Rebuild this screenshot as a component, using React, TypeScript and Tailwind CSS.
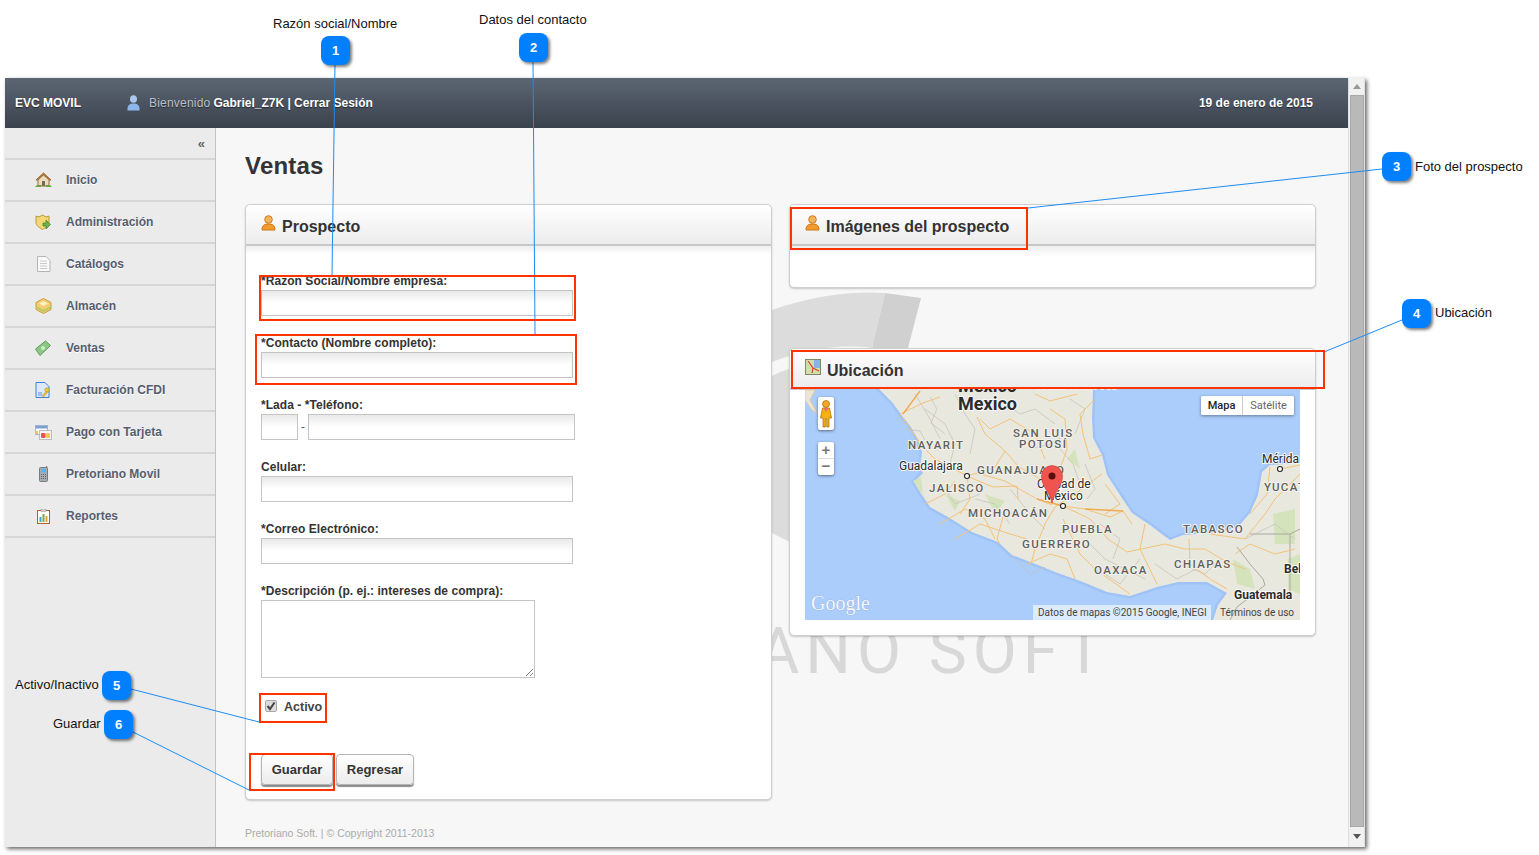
import React from 'react';

const sans = { fontFamily: '"Liberation Sans", Arial, sans-serif' };

// sidebar icons, 16x16
const HomeIcon = () => (
  <svg width="17" height="16" viewBox="0 0 17 16">
    <path d="M8.5 1 L1 8 L3 8 L3 14 L14 14 L14 8 L16 8 Z" fill="#e9dcc0" stroke="#9a6a32" strokeWidth="1" />
    <path d="M8.5 1 L1 8 L3.5 8 L8.5 3.5 L13.5 8 L16 8 Z" fill="#a8763c" />
    <rect x="7" y="9" width="3" height="5" fill="#7b6a58" />
    <path d="M0 15 h6 v-2 h-4 z M11 13 h4 l2 2 h-6 z" fill="#69a545" />
  </svg>
);
const ShieldIcon = () => (
  <svg width="16" height="16" viewBox="0 0 16 16">
    <path d="M1 2 L4 3 L7.5 1 L11 3 L14 2 L14 8 C14 12 10 14 7.5 15.5 C5 14 1 12 1 8 Z" fill="#f3d873" stroke="#b79a3c" />
    <path d="M8 9 h3 v-3 l4.500 4.500 l-4.500 4.500 v-3 h-3 z" fill="#6cb14a" stroke="#3f7f2b" strokeWidth=".7" />
  </svg>
);
const DocIcon = () => (
  <svg width="15" height="16" viewBox="0 0 15 16">
    <path d="M1.500 .5 H10 L14 4.500 V15.500 H1.500 Z" fill="#fafafa" stroke="#b4b4b4" />
    <path d="M4 5 H11 M4 7.500 H11 M4 10 H11 M4 12.500 H11" stroke="#c8c8c8" />
  </svg>
);
const BoxIcon = () => (
  <svg width="17" height="16" viewBox="0 0 17 16">
    <path d="M8.500 .5 L16 4.500 V11.500 L8.500 15.500 L1 11.500 V4.500 Z" fill="#f2cd72" stroke="#c99a3f" />
    <path d="M1 8 L8.500 12 L16 8 V10 L8.500 14 L1 10 Z" fill="#b5c95f" />
    <path d="M4 5.500 L8.500 3 L13 5.500 L8.500 8 Z" fill="#fdf1c4" />
  </svg>
);
const MoneyIcon = () => (
  <svg width="16" height="16" viewBox="0 0 16 16">
    <path d="M0.500 9 L10.500 1 L15.500 5.500 L5 15.500 Z" fill="#8cc785" stroke="#5f9d58" />
    <circle cx="8" cy="8" r="2" fill="#cfe9c9" />
  </svg>
);
const InvoiceIcon = () => (
  <svg width="16" height="16" viewBox="0 0 16 16">
    <path d="M1 .5 H10 L14 4.500 V15.500 H1 Z" fill="#dbe9fb" stroke="#3f7fd4" />
    <path d="M3 11 H7 M3 13 H7" stroke="#5b95e0" />
    <circle cx="12" cy="8" r="2.200" fill="#f0c64a" stroke="#b98d22" strokeWidth=".6" />
    <path d="M11 9.500 L7 14 L8.500 15 L12.500 10.500 Z" fill="#e8b93c" stroke="#b98d22" strokeWidth=".4" />
  </svg>
);
const CardIcon = () => (
  <svg width="17" height="15" viewBox="0 0 17 15">
    <rect x="0.500" y="0.500" width="12" height="9" fill="#fff" stroke="#9fb4cf" />
    <rect x="1" y="1" width="11" height="2.500" fill="#7f9fd0" />
    <rect x="0" y="6" width="3" height="3" fill="#eac06a" />
    <rect x="4.500" y="5.500" width="12" height="9" fill="#f4f4f4" stroke="#bdbdbd" />
    <rect x="6" y="8" width="4.500" height="5" rx="1" fill="#f1524d" />
    <rect x="11" y="8" width="4" height="5" rx="1" fill="#f3c65f" />
  </svg>
);
const PhoneIcon = () => (
  <svg width="9" height="16" viewBox="0 0 9 16">
    <rect x="0.500" y="1.500" width="8" height="14" rx="1" fill="#a8adb3" stroke="#767b82" />
    <rect x="2" y="3" width="5" height="3.500" fill="#5cb1ee" />
    <path d="M2 8.500 h5 M2 10.500 h5 M2 12.500 h5" stroke="#5d6268" strokeDasharray="1 1" />
    <rect x="7" y="0" width="1.200" height="2" fill="#767b82" />
  </svg>
);
const ReportIcon = () => (
  <svg width="13" height="15" viewBox="0 0 13 15">
    <rect x="0.500" y="1.500" width="12" height="13" fill="#fff" stroke="#bd5a2a" />
    <rect x="4" y="0" width="5" height="2.500" fill="#d8d8d8" stroke="#8c8c8c" strokeWidth=".5" />
    <rect x="2.500" y="8" width="2" height="5" fill="#4a9ed8" />
    <rect x="5.500" y="5" width="2" height="8" fill="#79b043" />
    <rect x="8.500" y="7" width="2" height="6" fill="#e8a33a" />
  </svg>
);
const PersonIcon = () => (
  <svg width="15" height="16" viewBox="0 0 15 16">
    <circle cx="7.500" cy="4.500" r="3.800" fill="#f3b35a" stroke="#d07c1c" />
    <path d="M1 15 C1 10 4 9 7.500 9 C11 9 14 10 14 15 Z" fill="#f19a2e" stroke="#cf7616" />
  </svg>
);
const MapIcon = () => (
  <svg width="16" height="16" viewBox="0 0 16 16">
    <rect x="0.500" y="0.500" width="15" height="15" fill="#cfe0a6" stroke="#7d8a6a" />
    <path d="M9 1 H15 V9 H9 Z" fill="#8ab4e8" />
    <path d="M3 2 L8 9 L7 14 M8 9 L14 12" stroke="#d9442f" strokeWidth="1.200" fill="none" />
  </svg>
);
const UserIcon = () => (
  <svg width="13" height="16" viewBox="0 0 13 16">
    <ellipse cx="6.500" cy="4" rx="3.500" ry="3.800" fill="#a9c8f0" />
    <path d="M0.500 15.500 C0 10 3 8.500 6.500 8.500 C10 8.500 13 10 12.500 15.500 Z" fill="#8fb6ea" />
  </svg>
);

const menu = [
  { label: 'Inicio', icon: <HomeIcon /> },
  { label: 'Administración', icon: <ShieldIcon /> },
  { label: 'Catálogos', icon: <DocIcon /> },
  { label: 'Almacén', icon: <BoxIcon /> },
  { label: 'Ventas', icon: <MoneyIcon /> },
  { label: 'Facturación CFDI', icon: <InvoiceIcon /> },
  { label: 'Pago con Tarjeta', icon: <CardIcon /> },
  { label: 'Pretoriano Movil', icon: <PhoneIcon /> },
  { label: 'Reportes', icon: <ReportIcon /> },
];

const Input = ({ className }: { className: string }) => (
  <div className={`h-[26px] border border-[#c4c4c4] bg-gradient-to-b from-[#e9e9e9] via-white to-white ${className}`} />
);

const Field = ({ label, children }: { label: string; children?: React.ReactNode }) => (
  <div className="mb-[18px]">
    <div className="h-[18px] text-[12px] leading-[18px] font-bold tracking-[0.05px] text-[#333]">{label}</div>
    {children ?? <Input className="w-[312px]" />}
  </div>
);

const PanelHeader = ({ icon, title }: { icon: React.ReactNode; title: string }) => (
  <div className="flex h-[41px] items-center gap-[6px] rounded-t-[5px] border-b-2 border-[#c8c8c8] bg-gradient-to-b from-white to-[#ececec] pl-[15px]">
    <span className="-mt-[3px] flex">{icon}</span>
    <h2 className="mt-[5px] text-[16px] font-bold text-[#333]">{title}</h2>
  </div>
);

const Button = ({ label, className }: { label: string; className: string }) => (
  <button className={`h-[31px] rounded-[4px] border border-[#b4b4b4] bg-gradient-to-b from-white to-[#ececec] text-[13px] font-bold text-[#333] shadow-[0_2px_1px_#8a8a8a] ${className}`}>
    {label}
  </button>
);

const roads = [
  'M95 25 L118 14 L135 8',
  'M95 25 L104 38 L118 58 L130 70 L162 87',
  'M162 87 L172 84 L200 92 L232 110 L247 116',
  'M162 87 L165 110 L155 125',
  'M162 87 L188 98 L212 97 L213 110',
  'M172 28 L180 45 L200 62 L214 78 L232 88 L247 100',
  'M175 30 L185 40 L205 30 L230 45 L240 70',
  'M200 62 L190 78 L172 84',
  'M250 118 L240 135 L230 160 L226 175',
  'M250 118 L270 105 L290 90 L297 85',
  'M258 117 L285 130 L303 150 L322 163 L360 155',
  'M258 117 L280 120 L305 128 L318 122 L327 135',
  'M258 130 L275 165 L290 180 L325 205',
  'M198 128 L192 150 L195 155',
  'M360 155 L380 160 L400 160 L420 172 L440 180',
  'M384 150 L385 175 L405 190 L422 200',
  'M405 145 L440 150 L460 125 L470 110 L495 85',
  'M475 80 L495 76',
  'M465 78 L462 105 L445 125',
  'M290 10 L275 25 L278 45 L285 70 L297 66',
  'M245 20 L260 30 L262 60 L255 80',
  'M135 135 L160 120 L180 130 L190 150',
  'M340 135 L335 160 L352 195',
  'M230 5 L245 12 L272 5',
  'M150 150 L175 135 L205 145 L222 150',
  'M120 115 L140 105 L150 92',
  'M222 175 L245 165 L262 170 L270 190',
  'M300 95 L315 115 L300 125',
  'M430 165 L445 155 L470 165 L490 160',
];
const minor = [
  'M120 20 L140 35 L150 55 L145 75', 'M110 5 L125 30 L135 50', 'M150 5 L160 25 L170 40 L165 65',
  'M200 15 L215 25 L230 20 L250 35', 'M205 100 L225 125 L240 140', 'M255 60 L268 75 L275 95',
  'M280 150 L300 170 L320 180 L340 190', 'M300 185 L315 195 L335 170', 'M375 175 L400 185 L415 170',
  'M440 150 L470 135 L490 150', 'M170 110 L190 115 L205 135', 'M140 100 L150 115 L175 105',
  'M125 8 L132 20 L126 34 L140 45', 'M100 40 L115 42 L122 55', 'M265 10 L280 20 L270 45', 'M280 75 L290 100 L282 110',
  'M225 60 L245 55 L262 45', 'M205 165 L225 185 L240 178', 'M295 135 L315 150 L308 170', 'M350 175 L372 190 L395 178',
];

const MapLabel = ({ x, y, children, spacing = 1.4 }: { x: number; y: number; children: string; spacing?: number }) => (
  <text x={x} y={y} fontFamily="Roboto, sans-serif" fontSize="11.500" fontWeight="500" letterSpacing={spacing} fill="#5f5f5f" stroke="#f3f1ea" strokeWidth="2" paintOrder="stroke">
    {children}
  </text>
);
const CityLabel = ({ x, y, children, bold, size = 12 }: { x: number; y: number; children: string; bold?: boolean; size?: number }) => (
  <text x={x} y={y} fontFamily="Roboto, sans-serif" fontSize={size} fontWeight={bold ? 700 : 400} fill="#2b2b2b" stroke="#fff" strokeWidth="2" paintOrder="stroke" strokeOpacity=".8">
    {children}
  </text>
);
const City = ({ x, y }: { x: number; y: number }) => <circle cx={x} cy={y} r="2.500" fill="#fff" stroke="#222" strokeWidth="1.100" />;

const land =
  'M74 0 L87 13 L98 28 L106 38 L112 49 L117 63 L115 79 L118 84 L109 93 L115 103 L125 118 L143 128 L167 143 L193 153 L207 166 L233 176 L250 183 L278 193 L302 203 L325 207 L352 198 L373 193 L402 193 L422 204 L413 216 L408 231 L495 231 L495 74 L465 76 L457 83 L453 106 L445 124 L432 139 L405 144 L378 146 L365 151 L358 146 L345 136 L327 124 L315 106 L302 86 L297 66 L288 49 L287 29 L288 0 Z';

const GoogleMap = () => (
  <div className="relative -mt-[1px] h-[231px] w-[495px] overflow-hidden bg-[#abcdfc]">
    <svg className="absolute inset-0" width="495" height="231" viewBox="0 0 495 231">
      <path d={land} fill="#8fb5ef" stroke="#a0c3f7" strokeWidth="5" />
      <path d="M0 1 L10 1 L5 11 L12 24 L7 21 L0 11 Z" fill="#e9e5d8" stroke="#f3bd6a" strokeWidth=".6" />
      <path d={land} fill="#e9e8de" />
      <path d="M108 92 L116 88 L118 105 L125 116 Z M140 105 L155 112 L150 122 Z M180 105 L200 112 L190 125 Z M262 70 L270 60 L275 80 Z M468 125 L490 120 L490 155 L470 155 Z M428 170 L445 180 L450 200 L432 195 Z M483 170 L495 165 L495 205 L483 200 Z" fill="#d5e3bd" />
      <path d="M445 145 L485 145 L495 140 M485 145 L485 205 M432 158 L445 175 L458 190 L460 196 L432 218 L425 231" fill="none" stroke="#a9a9a0" strokeWidth="1" />
      {minor.map((d, i) => (
        <path key={i} d={d} fill="none" stroke="#c4c2b6" strokeWidth=".7" />
      ))}
      {roads.map((d, i) => (
        <path key={i} d={d} fill="none" stroke="#f4c27a" strokeWidth="1" />
      ))}
      <path d="M115 2 L98 25 M232 110 L258 117 M280 120 L318 122" fill="none" stroke="#f0a94c" strokeWidth="1.300" />
      <text x="153" y="3" fontFamily="Roboto, sans-serif" fontSize="18" fontWeight="700" fill="#2b2b2b">Mexico</text>
      <text x="153" y="21" fontFamily="Roboto, sans-serif" fontSize="18" fontWeight="700" fill="#2b2b2b" stroke="#fff" strokeWidth="2" paintOrder="stroke" strokeOpacity=".7">Mexico</text>
      <MapLabel x={230} y={0}>TAMAULIPAS</MapLabel>
      <MapLabel x={208} y={48}>SAN LUIS</MapLabel>
      <MapLabel x={214} y={59}>POTOSÍ</MapLabel>
      <MapLabel x={103} y={60}>NAYARIT</MapLabel>
      <MapLabel x={172} y={85}>GUANAJUATO</MapLabel>
      <MapLabel x={124} y={103}>JALISCO</MapLabel>
      <MapLabel x={163} y={128}>MICHOACÁN</MapLabel>
      <MapLabel x={257} y={144}>PUEBLA</MapLabel>
      <MapLabel x={217} y={159}>GUERRERO</MapLabel>
      <MapLabel x={289} y={185}>OAXACA</MapLabel>
      <MapLabel x={378} y={144}>TABASCO</MapLabel>
      <MapLabel x={369} y={179}>CHIAPAS</MapLabel>
      <MapLabel x={459} y={102}>YUCATÁN</MapLabel>
      <CityLabel x={94} y={81}>Guadalajara</CityLabel>
      <CityLabel x={232} y={99}>Ciudad de</CityLabel>
      <CityLabel x={239} y={111}>México</CityLabel>
      <CityLabel x={457} y={74}>Mérida</CityLabel>
      <CityLabel x={429} y={210} bold>Guatemala</CityLabel>
      <CityLabel x={479} y={184} bold>Belice</CityLabel>
      <City x={162} y={87} />
      <City x={258} y={117} />
      <City x={475} y={80} />
      <path d="M247 114 C245 103 236.500 98 236.500 87 A10.500 10.500 0 0 1 257.500 87 C257.500 98 249 103 247 114 Z" fill="#f0544f" stroke="#c9352f" strokeWidth=".6" />
      <circle cx="247" cy="87" r="3.500" fill="#5a0d09" />
      <text x="6" y="221" fontFamily='"Liberation Serif", serif' fontSize="20" fill="#f4f6fb" stroke="#8aa4cc" strokeWidth=".5" paintOrder="stroke">Google</text>
    </svg>

    <div className="absolute left-[13px] top-[8px] flex h-[33px] w-[16px] items-center justify-center rounded-[2px] bg-white shadow-[0_1px_3px_rgba(0,0,0,.5)]">
      <svg width="12" height="28" viewBox="0 0 12 28">
        <circle cx="6" cy="4" r="3.500" fill="#f5a623" stroke="#a86a00" strokeWidth=".7" />
        <path d="M2.500 8 H9.500 L11.500 18 H9 V27 H6.700 V19 H5.300 V27 H3 V18 H0.500 Z" fill="#f5b013" stroke="#a86a00" strokeWidth=".7" />
        <path d="M3.500 8 H8.500 L6 12 Z" fill="#ee6a6a" />
      </svg>
    </div>

    <div className="absolute left-[13px] top-[53px] flex h-[33px] w-[16px] flex-col rounded-[2px] bg-white text-center shadow-[0_1px_3px_rgba(0,0,0,.5)]">
      <div className="h-[17px] border-b border-[#dcdcdc] text-[15px] leading-[16px] font-bold text-[#7a7a7a]">+</div>
      <div className="h-[16px] text-[15px] leading-[14px] font-bold text-[#7a7a7a]">−</div>
    </div>

    <div className="absolute left-[396px] top-[7px] flex h-[19px] text-[11px] leading-[19px] shadow-[0_1px_3px_rgba(0,0,0,.4)]" style={{ fontFamily: 'Roboto, sans-serif' }}>
      <div className="w-[42px] rounded-l-[2px] border-r border-[#ccc] bg-white text-center font-medium text-[#222]">Mapa</div>
      <div className="w-[51px] rounded-r-[2px] bg-white text-center text-[#666]">Satélite</div>
    </div>

    <div className="absolute bottom-0 left-[228px] flex h-[15px] w-[267px] text-[10px] leading-[15px] text-[#444]" style={{ fontFamily: 'Roboto, sans-serif' }}>
      <span className="w-[178px] bg-white/60 pl-[5px] whitespace-nowrap">Datos de mapas ©2015 Google, INEGI</span>
      <span className="ml-[9px] whitespace-nowrap">Términos de uso</span>
    </div>
  </div>
);

const Panel = ({ children, className }: { children: React.ReactNode; className?: string }) => (
  <section className={`relative z-10 rounded-[5px] border border-[#cfcfcf] bg-white shadow-[0_1px_2px_rgba(0,0,0,.2)] ${className ?? ''}`}>{children}</section>
);

const callouts = [
  { n: 1, x: 321, y: 36 },
  { n: 2, x: 519, y: 33 },
  { n: 3, x: 1382, y: 152 },
  { n: 4, x: 1402, y: 299 },
  { n: 5, x: 102, y: 671 },
  { n: 6, x: 104, y: 710 },
];
const calloutLabels = [
  { t: 'Razón social/Nombre', x: 273, y: 15 },
  { t: 'Datos del contacto', x: 479, y: 11 },
  { t: 'Foto del prospecto', x: 1415, y: 158 },
  { t: 'Ubicación', x: 1435, y: 304 },
  { t: 'Activo/Inactivo', x: 15, y: 676 },
  { t: 'Guardar', x: 53, y: 715 },
];
const redBoxes = [
  'left-[259px] top-[275px] w-[317px] h-[46px]',
  'left-[255px] top-[334px] w-[322px] h-[51px]',
  'left-[790px] top-[207px] w-[238px] h-[43px]',
  'left-[791px] top-[350px] w-[534px] h-[39px]',
  'left-[259px] top-[693px] w-[68px] h-[30px]',
  'left-[249px] top-[753px] w-[86px] h-[38px]',
];

export default function App() {
  return (
    <div className="relative h-[855px] w-[1539px] overflow-hidden bg-white pl-[5px] pt-[78px]" style={sans}>
      <div className="flex h-[769px] w-[1360px] shadow-[2px_2px_4px_rgba(0,0,0,.6)]">
        <div className="flex w-[1343px] flex-col">
          <header className="flex h-[50px] items-center bg-gradient-to-b from-[#5c6673] to-[#3a424d] pl-[10px] pr-[35px] text-[12px] font-bold text-white [text-shadow:0_1px_1px_rgba(0,0,0,.5)]">
            <span className="w-[112px]">EVC MOVIL</span>
            <UserIcon />
            <span className="ml-[9px] font-normal tracking-[0.2px] text-[#bcc0c5]">Bienvenido</span>
            <span className="ml-[3px]">Gabriel_Z7K | Cerrar Sesión</span>
            <span className="ml-auto">19 de enero de 2015</span>
          </header>

          <div className="flex flex-1">
            <aside className="w-[211px] border-r border-[#c4c4c4] bg-[#ebebeb]">
              <div className="h-[32px] border-b-2 border-[#d6d6d6] pr-[10px] pt-[6px] text-right text-[13px] leading-[20px] font-bold text-[#666]">«</div>
              {menu.map((item) => (
                <div key={item.label} className="flex h-[42px] items-center border-b-2 border-[#d6d6d6] text-[12px] font-bold text-[#555d6e] [text-shadow:0_1px_0_#fff]">
                  <span className="flex w-[61px] shrink-0 justify-center pl-[21px] pr-[6px]">{item.icon}</span>
                  {item.label}
                </div>
              ))}
            </aside>

            <main className="relative flex-1 bg-[#f7f7f7] pl-[29px]">
              <svg className="absolute left-[544px] top-[152px]" width="340" height="300" viewBox="760 280 340 300">
                <path d="M772 310 Q830 290 885 293 L872 348 Q825 342 772 362 Z" fill="#dcdcdc" />
                <path d="M885 293 L921 298 L908 348 L872 348 Z" fill="#d0d0d0" />
                <path d="M772 376 Q790 366 810 366 L810 552 L772 533 Z" fill="#dcdcdc" />
              </svg>
              <div className="absolute right-[239px] top-[488px] text-[64px] leading-[72px] font-normal tracking-[6px] whitespace-nowrap text-[#d8d8d8]" style={{ fontFamily: 'Roboto, sans-serif' }}>
                PRETORIANO SOFT
              </div>

              <h1 className="h-[76px] pt-[20px] text-[24px] leading-[36px] font-bold tracking-[0.2px] text-[#333]">Ventas</h1>

              <div className="flex gap-[17px]">
                <Panel className="h-[596px] w-[527px]">
                  <PanelHeader icon={<PersonIcon />} title="Prospecto" />
                  <div className="bg-gradient-to-b from-[#eeeeee] to-white to-[8px] px-[15px] pt-[26px]">
                    <Field label="*Razon Social/Nombre empresa:" />
                    <Field label="*Contacto (Nombre completo):" />
                    <Field label="*Lada - *Teléfono:">
                      <div className="flex items-center text-[12px] text-[#555]">
                        <Input className="w-[37px]" />
                        <span className="w-[10px] text-center">-</span>
                        <Input className="w-[267px]" />
                      </div>
                    </Field>
                    <Field label="Celular:" />
                    <Field label="*Correo Electrónico:" />
                    <Field label="*Descripción (p. ej.: intereses de compra):">
                      <div className="relative h-[78px] w-[274px] border border-[#c4c4c4] bg-white">
                        <svg className="absolute bottom-0 right-0" width="9" height="9" viewBox="0 0 9 9">
                          <path d="M1 8 L8 1 M5 8 L8 5" stroke="#888" />
                        </svg>
                      </div>
                    </Field>
                    <div className="flex items-start">
                      <span className="ml-[4px] mt-[4px] flex h-[12px] w-[12px] items-center justify-center rounded-[2px] border border-[#a8a8a8] bg-[#dcdcdc]">
                        <svg width="10" height="10" viewBox="0 0 10 10">
                          <path d="M1.500 5 L4 8 L8.500 1.500" fill="none" stroke="#444" strokeWidth="2" />
                        </svg>
                      </span>
                      <span className="ml-[7px] mt-[1px] text-[12.5px] leading-[20px] font-bold text-[#444]">Activo</span>
                    </div>
                    <div className="mt-[37px] flex gap-[3px]">
                      <Button label="Guardar" className="w-[72px]" />
                      <Button label="Regresar" className="w-[78px]" />
                    </div>
                  </div>
                </Panel>

                <div className="flex w-[527px] flex-col gap-[60px]">
                  <Panel className="h-[84px]">
                    <PanelHeader icon={<PersonIcon />} title="Imágenes del prospecto" />
                    <div className="h-[10px] bg-gradient-to-b from-[#eeeeee] to-white" />
                  </Panel>
                  <Panel className="h-[288px]">
                    <PanelHeader icon={<MapIcon />} title="Ubicación" />
                    <div className="px-[15px]">
                      <GoogleMap />
                    </div>
                  </Panel>
                </div>
              </div>

              <footer className="mt-[25px] text-[10.5px] leading-[16px] text-[#aaa]">Pretoriano Soft. | © Copyright 2011-2013</footer>
            </main>
          </div>
        </div>

        <div className="flex w-[17px] flex-col items-center border-x border-[#e0e0e0] bg-[#f1f1f1]">
          <div className="flex h-[17px] items-center justify-center">
            <span className="border-x-[4px] border-b-[5px] border-x-transparent border-b-[#999]" />
          </div>
          <div className="h-[732px] w-[14px] border border-[#a8a8a8] bg-[#b9b9b9]" />
          <div className="flex h-[18px] items-center justify-center">
            <span className="border-x-[4px] border-t-[5px] border-x-transparent border-t-[#555]" />
          </div>
        </div>
      </div>

      {/* callouts on top of the screenshot */}
      <svg className="pointer-events-none absolute inset-0 z-20" width="1539" height="855">
        <g stroke="#1e8cf0" strokeWidth="1" fill="none">
          <path d="M335 64 L332 275" />
          <path d="M533 61 L535 334" />
          <path d="M1382 169 L1028 208" />
          <path d="M1402 320 L1324 352" />
          <path d="M131 689 L259 722" />
          <path d="M133 732 L249 790" />
        </g>
      </svg>
      {redBoxes.map((box) => (
        <div key={box} className={`pointer-events-none absolute z-20 border-2 border-[#ff3300] ${box}`} />
      ))}
      {callouts.map((c) => (
        <div
          key={c.n}
          className="absolute z-30 flex h-[29px] w-[29px] items-center justify-center rounded-[8px] bg-[#0080ff] text-[13px] font-bold text-white shadow-[2px_2px_3px_rgba(0,0,0,.5)]"
          style={{ left: c.x, top: c.y }}
        >
          {c.n}
        </div>
      ))}
      {calloutLabels.map((l) => (
        <span key={l.t} className="absolute z-30 text-[13px] leading-[18px] whitespace-nowrap text-[#111]" style={{ left: l.x, top: l.y }}>
          {l.t}
        </span>
      ))}
    </div>
  );
}
